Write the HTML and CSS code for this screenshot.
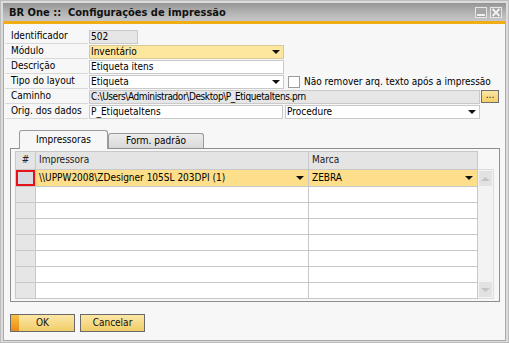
FILE: index.html
```html
<!DOCTYPE html>
<html>
<head>
<meta charset="utf-8">
<link rel="stylesheet" href="styles.css">
</head>
<body>
<div class="window">
  <div class="titlebar">
    <span class="title">BR One ::&nbsp; Configurações de impressão</span>
    <div class="winbtns">
      <span class="wbtn"><svg width="10" height="9" viewBox="0 0 10 9"><rect x="1" y="6" width="8" height="2" fill="#f2f2f2"/></svg></span>
      <span class="wbtn"><svg width="10" height="9" viewBox="0 0 10 9"><path d="M1.5 1 L8.5 8 M8.5 1 L1.5 8" stroke="#f2f2f2" stroke-width="2"/></svg></span>
    </div>
  </div>
  <div class="body">
    <div class="form">
      <div class="row">
        <div class="lbl">Identificador</div>
        <div class="field ro w49">502</div>
      </div>
      <div class="row">
        <div class="lbl">Módulo</div>
        <div class="field yellow w195">Inventário<span class="arrow"></span></div>
      </div>
      <div class="row">
        <div class="lbl">Descrição</div>
        <div class="field w195">Etiqueta itens</div>
      </div>
      <div class="row">
        <div class="lbl">Tipo do layout</div>
        <div class="field w195">Etiqueta<span class="arrow"></span></div>
        <span class="check"></span>
        <span class="checklbl">Não remover arq. texto após a impressão</span>
      </div>
      <div class="row">
        <div class="lbl">Caminho</div>
        <div class="field ro w391 path">C:\Users\Administrador\Desktop\P_EtiquetaItens.prn</div>
        <div class="browse">...</div>
      </div>
      <div class="row">
        <div class="lbl">Orig. dos dados</div>
        <div class="field w194">P_EtiquetaItens</div>
        <div class="field w195 ml2">Procedure<span class="arrow"></span></div>
      </div>
    </div>

    <div class="tabs">
      <div class="tab active">Impressoras</div>
      <div class="tab">Form. padrão</div>
    </div>
    <div class="panel">
      <div class="gridwrap">
        <div class="grid">
          <div class="c hd num">#</div><div class="c hd">Impressora</div><div class="c hd">Marca</div>
          <div class="c num sel"></div><div class="c yel">\\UPPW2008\ZDesigner 105SL 203DPI (1)<span class="arrow"></span></div><div class="c yel">ZEBRA<span class="arrow"></span></div>
          <div class="c num"></div><div class="c"></div><div class="c"></div>
          <div class="c num"></div><div class="c"></div><div class="c"></div>
          <div class="c num"></div><div class="c"></div><div class="c"></div>
          <div class="c num"></div><div class="c"></div><div class="c"></div>
          <div class="c num"></div><div class="c"></div><div class="c"></div>
          <div class="c num"></div><div class="c"></div><div class="c"></div>
          <div class="c num"></div><div class="c"></div><div class="c"></div>
        </div>
        <div class="scroll">
          <div class="sbtn"><svg width="11" height="6" viewBox="0 0 11 6"><path d="M1 5 L5.5 1 L10 5 Z" fill="#c4c4c4"/></svg></div>
          <div class="strack"></div>
          <div class="sbtn"><svg width="11" height="6" viewBox="0 0 11 6"><path d="M1 1 L5.5 5 L10 1 Z" fill="#c4c4c4"/></svg></div>
        </div>
      </div>
    </div>

    <div class="buttons">
      <div class="btn primary">OK</div>
      <div class="btn">Cancelar</div>
    </div>
  </div>
</div>
</body>
</html>
```

FILE: styles.css
```css
* { box-sizing: border-box; }
html, body { margin: 0; padding: 0; }
body {
  width: 509px;
  height: 343px;
  background: #ffffff;
  font-family: "DejaVu Sans Condensed", "DejaVu Sans", sans-serif;
  font-stretch: condensed;
  font-size: 10px;
  color: #000;
  overflow: hidden;
}
.window {
  width: 509px;
  height: 343px;
  border: 1px solid #bdbdbd;
  background: #dcdcdc;
  padding: 2px 2px 1px 2px;
  display: flex;
  flex-direction: column;
}
.titlebar {
  height: 21px;
  flex: none;
  background: linear-gradient(to bottom, #959595 0%, #b4b4b4 55%, #c6c6c6 100%);
  border-bottom: 3px solid #f1ad14;
  display: flex;
  align-items: center;
  justify-content: space-between;
  padding: 0 4px 0 6px;
}
.title {
  font-weight: bold;
  font-size: 11px;
  color: #111;
  white-space: pre;
  margin-top: 1px;
}
.winbtns { display: flex; gap: 3px; margin-top: 1px; }
.wbtn {
  width: 12px;
  height: 11px;
  border: 1px solid #e6e6e6;
  background: #a6a6a6;
  display: flex;
  align-items: center;
  justify-content: center;
}
.body {
  flex: 1;
  background: #f7f7f7;
  border-left: 1px solid #a9a9a9;
  border-right: 1px solid #a9a9a9;
  border-bottom: 1px solid #a9a9a9;
  padding: 5px 0 0 1px;
  display: flex;
  flex-direction: column;
}
.form { display: flex; flex-direction: column; }
.row {
  height: 15px;
  display: flex;
  align-items: flex-start;
}
.lbl {
  width: 83px;
  height: 15px;
  padding-left: 6px;
  line-height: 14px;
  border-bottom: 1px solid #d9d9d9;
  margin-right: 1px;
  white-space: nowrap;
}
.field {
  position: relative;
  height: 14px;
  margin-top: 1px;
  border: 1px solid #c9c9c9;
  background: #fff;
  line-height: 12px;
  padding-left: 1px;
  white-space: nowrap;
  overflow: hidden;
}
.ro { background: #e6e6e6; }
.path { letter-spacing: -0.4px; }
.yellow { background: #fde79f; border-color: #d8c99a; }
.w49 { width: 49px; }
.w194 { width: 194px; }
.w195 { width: 195px; }
.w391 { width: 391px; }
.ml2 { margin-left: 2px; }
.arrow {
  position: absolute;
  right: 3px;
  top: 4px;
  width: 0;
  height: 0;
  border-left: 4px solid transparent;
  border-right: 4px solid transparent;
  border-top: 4px solid #111;
}
.check {
  width: 12px;
  height: 12px;
  margin: 2px 4px 0 4px;
  border: 1px solid #9c9c9c;
  background: #fff;
}
.checklbl { line-height: 15px; white-space: nowrap; }
.browse {
  width: 18px;
  height: 13px;
  margin-top: 1px;
  margin-left: 1px;
  border: 1px solid #6f6f6f;
  background: linear-gradient(to bottom, #fbe6a2, #f3cf68);
  font-size: 10px;
  line-height: 8px;
  text-align: center;
  color: #222;
}
.tabs {
  display: flex;
  align-items: flex-end;
  margin-top: 11px;
  margin-left: 14px;
  height: 18px;
  position: relative;
  z-index: 1;
}
.tab {
  height: 15px;
  padding: 0;
  width: 96px;
  border: 1px solid #9a9a9a;
  border-bottom: none;
  border-radius: 3px 3px 0 0;
  background: linear-gradient(to bottom, #ececec, #d9d9d9);
  text-align: center;
  line-height: 14px;
}
.tab.active {
  width: 89px;
  height: 19px;
  background: #f7f7f7;
  margin-bottom: -1px;
  line-height: 17px;
}
.panel {
  width: 490px;
  margin-left: 5px;
  height: 154px;
  border: 1px solid #8e8e8e;
  padding: 2px 5px 0 4px;
}
.gridwrap { display: flex; }
.grid {
  display: grid;
  grid-template-columns: 20px 273px 169px;
  grid-template-rows: 18px 17px repeat(7, 16px);
  border-left: 1px solid #c8c8c8;
  border-top: 1px solid #c8c8c8;
  background: #fff;
}
.c {
  position: relative;
  border-right: 1px solid #c8c8c8;
  border-bottom: 1px solid #c8c8c8;
  padding-left: 3px;
  line-height: 15px;
  white-space: nowrap;
  overflow: hidden;
}
.hd { background: #e4e4e4; line-height: 16px; color: #222; }
.num { background: #e6e6e6; padding-left: 0; text-align: center; }
.hd.num { background: #e4e4e4; }
.yel { background: #fdde8a; }
.yel .arrow { top: 6px; right: 4px; }
.sel {
  background: #d6d9df;
  box-shadow: inset 0 0 0 2px #e3121c;
}
.scroll {
  width: 16px;
  margin-top: 18px;
  height: 130px;
  background: #f3f3f3;
  border: 1px solid #dcdcdc;
  border-left: none;
  display: flex;
  flex-direction: column;
  padding: 1px;
}
.sbtn {
  height: 15px;
  background: #e2e2e2;
  display: flex;
  align-items: center;
  justify-content: center;
}
.strack { flex: 1; }
.buttons {
  display: flex;
  gap: 5px;
  margin-top: 12px;
  margin-left: 5px;
}
.btn {
  width: 65px;
  height: 18px;
  border: 1px solid #6a6a6a;
  background: linear-gradient(to bottom, #fbe7a6, #f1cd68);
  text-align: center;
  line-height: 16px;
  color: #111;
}
.btn.primary {
  background: linear-gradient(to bottom, #f7c244, #ee8a12) left top / 8px 100% no-repeat, linear-gradient(to bottom, #fbe7a6, #f1cd68);
}
```
